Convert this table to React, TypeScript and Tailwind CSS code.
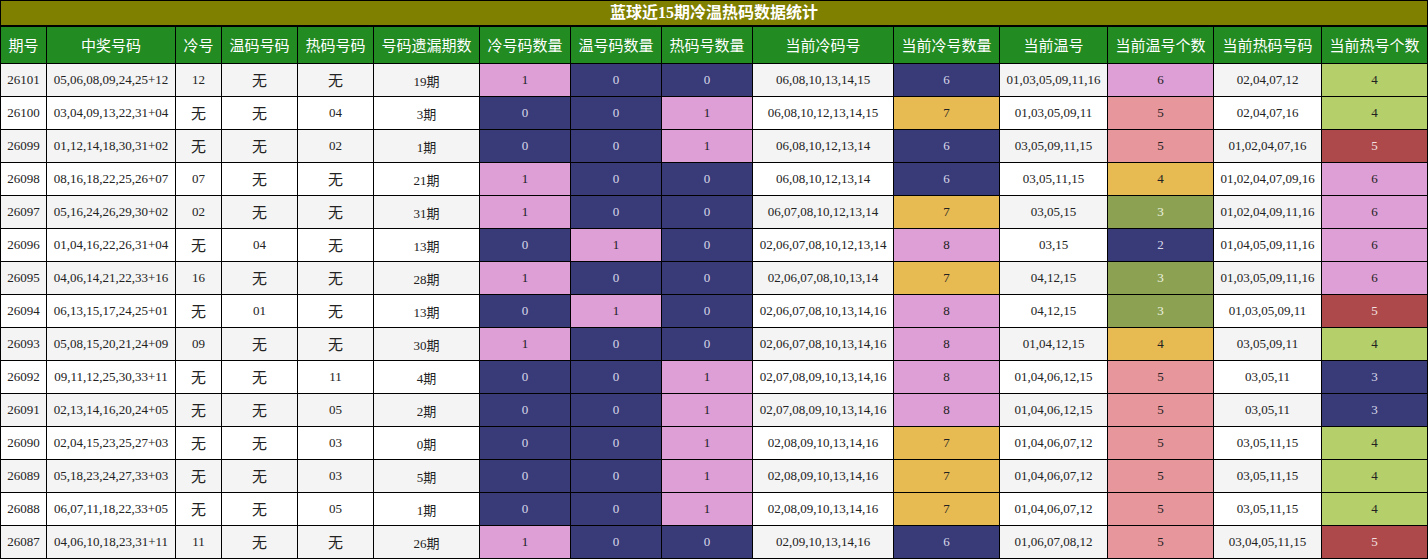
import React from 'react';

type Row = [string, string, string, string, string, string, number, number, number, string, number, string, number, string, number];

const rows: Row[] = [
  ['26101', '05,06,08,09,24,25+12', '12', '无', '无', '19期', 1, 0, 0, '06,08,10,13,14,15', 6, '01,03,05,09,11,16', 6, '02,04,07,12', 4],
  ['26100', '03,04,09,13,22,31+04', '无', '无', '04', '3期', 0, 0, 1, '06,08,10,12,13,14,15', 7, '01,03,05,09,11', 5, '02,04,07,16', 4],
  ['26099', '01,12,14,18,30,31+02', '无', '无', '02', '1期', 0, 0, 1, '06,08,10,12,13,14', 6, '03,05,09,11,15', 5, '01,02,04,07,16', 5],
  ['26098', '08,16,18,22,25,26+07', '07', '无', '无', '21期', 1, 0, 0, '06,08,10,12,13,14', 6, '03,05,11,15', 4, '01,02,04,07,09,16', 6],
  ['26097', '05,16,24,26,29,30+02', '02', '无', '无', '31期', 1, 0, 0, '06,07,08,10,12,13,14', 7, '03,05,15', 3, '01,02,04,09,11,16', 6],
  ['26096', '01,04,16,22,26,31+04', '无', '04', '无', '13期', 0, 1, 0, '02,06,07,08,10,12,13,14', 8, '03,15', 2, '01,04,05,09,11,16', 6],
  ['26095', '04,06,14,21,22,33+16', '16', '无', '无', '28期', 1, 0, 0, '02,06,07,08,10,13,14', 7, '04,12,15', 3, '01,03,05,09,11,16', 6],
  ['26094', '06,13,15,17,24,25+01', '无', '01', '无', '13期', 0, 1, 0, '02,06,07,08,10,13,14,16', 8, '04,12,15', 3, '01,03,05,09,11', 5],
  ['26093', '05,08,15,20,21,24+09', '09', '无', '无', '30期', 1, 0, 0, '02,06,07,08,10,13,14,16', 8, '01,04,12,15', 4, '03,05,09,11', 4],
  ['26092', '09,11,12,25,30,33+11', '无', '无', '11', '4期', 0, 0, 1, '02,07,08,09,10,13,14,16', 8, '01,04,06,12,15', 5, '03,05,11', 3],
  ['26091', '02,13,14,16,20,24+05', '无', '无', '05', '2期', 0, 0, 1, '02,07,08,09,10,13,14,16', 8, '01,04,06,12,15', 5, '03,05,11', 3],
  ['26090', '02,04,15,23,25,27+03', '无', '无', '03', '0期', 0, 0, 1, '02,08,09,10,13,14,16', 7, '01,04,06,07,12', 5, '03,05,11,15', 4],
  ['26089', '05,18,23,24,27,33+03', '无', '无', '03', '5期', 0, 0, 1, '02,08,09,10,13,14,16', 7, '01,04,06,07,12', 5, '03,05,11,15', 4],
  ['26088', '06,07,11,18,22,33+05', '无', '无', '05', '1期', 0, 0, 1, '02,08,09,10,13,14,16', 7, '01,04,06,07,12', 5, '03,05,11,15', 4],
  ['26087', '04,06,10,18,23,31+11', '11', '无', '无', '26期', 1, 0, 0, '02,09,10,13,14,16', 6, '01,06,07,08,12', 5, '03,04,05,11,15', 5],
];

const headers = ['期号', '中奖号码', '冷号', '温码号码', '热码号码', '号码遗漏期数', '冷号码数量', '温号码数量', '热码号数量', '当前冷码号', '当前冷号数量', '当前温号', '当前温号个数', '当前热码号码', '当前热号个数'];

const NAVY = 'bg-[#393b79] text-[#d8d8e8]';
const PLUM = 'bg-[#de9ed6] text-[#222]';
const YELLOW = 'bg-[#e7ba52] text-[#222]';
const PINK = 'bg-[#e7969c] text-[#222]';
const OLIVE = 'bg-[#8ca252] text-[#eef2e0]';
const LIME = 'bg-[#b5cf6b] text-[#222]';
const RED = 'bg-[#ad494a] text-[#f3e0e0]';

// colour per count, per column
const countColor: Record<number, Record<number, string>> = {
  6: { 0: NAVY, 1: PLUM },
  7: { 0: NAVY, 1: PLUM },
  8: { 0: NAVY, 1: PLUM },
  10: { 6: NAVY, 7: YELLOW, 8: PLUM },
  12: { 2: NAVY, 3: OLIVE, 4: YELLOW, 5: PINK, 6: PLUM },
  14: { 3: NAVY, 4: LIME, 5: RED, 6: PLUM },
};

const cellFont = { fontFamily: '"Liberation Serif", "Noto Sans CJK SC", serif' };

const App: React.FC = () => {
  return (
    <div className="w-[1428px] h-[559px] bg-white" style={cellFont}>
      {/* Title */}
      <div className="h-[26px] border border-black bg-[#808000] flex items-center justify-center text-white text-[16px] font-bold">
        蓝球近15期冷温热码数据统计
      </div>

      {/* Table */}
      <div className="grid grid-cols-[45px_128px_45px_75px_75px_105px_90px_90px_90px_140px_105px_107px_105px_107px_105px] grid-rows-[36px] auto-rows-[32px] gap-px p-px bg-black">
        {headers.map((h) => (
          <div
            key={h}
            className="bg-[#228b22] text-white text-[15px] flex items-center justify-center whitespace-nowrap"
            style={{ fontFamily: '"Noto Sans CJK SC", sans-serif' }}
          >
            {h}
          </div>
        ))}
        {rows.map((r, ri) => {
          const stripe = ri % 2 === 0 ? 'bg-[#f4f4f4]' : 'bg-white';
          return r.map((v, ci) => {
            const colorMap = countColor[ci];
            const cls = colorMap ? colorMap[v as number] : `${stripe} text-[#222]`;
            const isWu = v === '无';
            return (
              <div
                key={`${ri}-${ci}`}
                className={`${cls} flex items-center justify-center whitespace-nowrap ${isWu ? 'text-[15px] pt-[3px]' : 'text-[13px]'} ${typeof v === 'string' && v.endsWith('期') ? 'pt-[3px]' : ''}`}
              >
                {v}
              </div>
            );
          });
        })}
      </div>
    </div>
  );
};

export default App;
